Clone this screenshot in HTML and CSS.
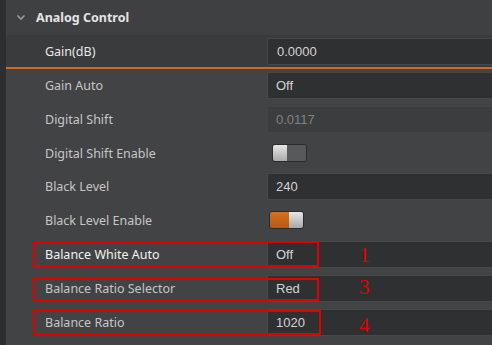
FILE: index.html
```html
<!DOCTYPE html>
<html lang="en">
<head>
  <meta charset="UTF-8" />
  <title>Analog Control</title>
  <link rel="stylesheet" href="styles.css">
</head>
<body>
  <div class="panel">
    <div class="group-head">
      <svg class="chevron" width="10" height="7" viewBox="0 0 10 7"><path d="M1.5 1.5 L5 5 L8.5 1.5" fill="none" stroke="#9a9b9d" stroke-width="1.6"/></svg>
      <span>Analog Control</span>
    </div>

    <div class="row selected">
      <div class="label">Gain(dB)</div>
      <div class="value"><div class="field">0.0000</div></div>
    </div>
    <div class="row short">
      <div class="label">Gain Auto</div>
      <div class="value"><div class="field">Off</div></div>
    </div>
    <div class="row">
      <div class="label">Digital Shift</div>
      <div class="value"><div class="field disabled">0.0117</div></div>
    </div>
    <div class="row">
      <div class="label">Digital Shift Enable</div>
      <div class="value"><div class="toggle"><span class="knob"></span><span class="track"></span></div></div>
    </div>
    <div class="row short">
      <div class="label">Black Level</div>
      <div class="value"><div class="field">240</div></div>
    </div>
    <div class="row">
      <div class="label">Black Level Enable</div>
      <div class="value"><div class="toggle on"><span class="track"></span><span class="knob"></span></div></div>
    </div>
    <div class="row">
      <div class="label bright">Balance White Auto</div>
      <div class="value"><div class="field">Off</div></div>
      <div class="mark mark-1"></div>
      <div class="num num-1">1</div>
    </div>
    <div class="row">
      <div class="label">Balance Ratio Selector</div>
      <div class="value"><div class="field">Red</div></div>
      <div class="mark mark-2"></div>
      <div class="num num-2">3</div>
    </div>
    <div class="row">
      <div class="label">Balance Ratio</div>
      <div class="value"><div class="field">1020</div></div>
      <div class="mark mark-3"></div>
      <div class="num num-3">4</div>
    </div>
    <div class="row">
      <div class="label"></div>
      <div class="value"></div>
    </div>
  </div>
</body>
</html>
```

FILE: styles.css
```css
body {
  margin: 0;
  background-color: #414244;
  font-family: 'Noto Sans', 'Open Sans', sans-serif;
  overflow: hidden;
}
.panel {
  width: 492px;
  height: 345px;
  border-left: 6px solid #2d2e30;
  box-sizing: border-box;
  background-color: #424345;
  overflow: hidden;
}
.group-head {
  height: 35px;
  display: flex;
  align-items: center;
  background-color: #3f4042;
  color: #e4e4e4;
  font-weight: bold;
  font-size: 12.5px;
}
.chevron {
  margin-left: 10px;
  margin-right: 10px;
}
.row {
  position: relative;
  height: 34px;
  display: flex;
  align-items: center;
  box-sizing: border-box;
}
.row.short {
  height: 33px;
}
.row.selected {
  background-color: #3a3b3d;
  border-bottom: 2px solid #d2691e;
}
.label {
  width: 261px;
  box-sizing: border-box;
  padding-left: 39px;
  font-size: 12.5px;
  color: #c6c6c6;
}
.selected .label {
  color: #e8e8e8;
}
.label.bright {
  color: #f2f2f2;
}
.value {
  flex: 1;
  height: 100%;
  display: flex;
  align-items: center;
}
.field {
  flex: 1;
  height: 27px;
  box-sizing: border-box;
  display: flex;
  align-items: center;
  padding-left: 8px;
  background-color: #2f3032;
  border: 1px solid #47484a;
  border-right: none;
  border-radius: 2px 0 0 2px;
  font-family: 'Liberation Sans', Arial, sans-serif;
  font-size: 13px;
  color: #d4d4d4;
}
.selected .field {
  padding-left: 9px;
}
.field.disabled {
  background-color: #3c3d3f;
  border-color: #434446;
  color: #808182;
}
.toggle {
  display: flex;
  width: 35px;
  height: 18px;
  margin-left: 5px;
  border: 1px solid #2a2b2c;
  border-radius: 3px;
  box-sizing: border-box;
  overflow: hidden;
}
.toggle .track {
  flex: 1;
  background-color: #58595b;
}
.toggle .knob {
  width: 14px;
  background: linear-gradient(#e6e6e6, #a9a9a9);
}
.toggle.on {
  margin-left: 2px;
}
.toggle.on .track {
  background: linear-gradient(#d4701f, #b95a14);
}
.mark {
  position: absolute;
  left: 27px;
  border: 2px solid #e00000;
  box-sizing: border-box;
}
.mark-1 {
  top: 4px;
  width: 286px;
  height: 26px;
}
.mark-2 {
  top: 7px;
  width: 286px;
  height: 23px;
}
.mark-3 {
  top: 5px;
  width: 288px;
  height: 25px;
}
.num {
  position: absolute;
  left: 353px;
  font-family: 'Liberation Serif', 'Times New Roman', serif;
  font-size: 21px;
  line-height: 21px;
  color: #e00000;
}
.num-1 { top: 8px; }
.num-2 { top: 6px; }
.num-3 { top: 10px; }
```
